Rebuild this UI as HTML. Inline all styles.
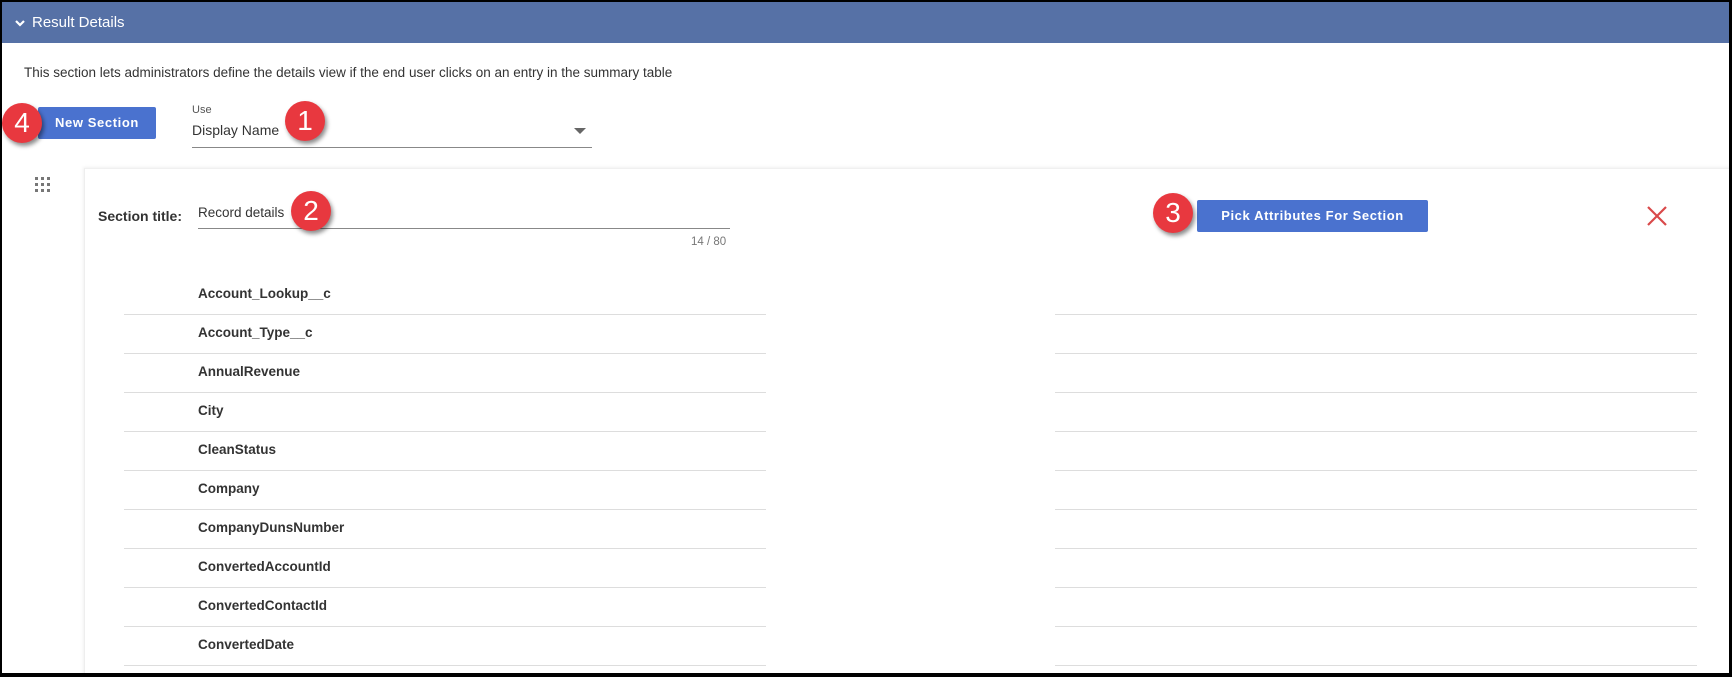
<!DOCTYPE html>
<html><head><meta charset="utf-8"><style>
*{margin:0;padding:0;box-sizing:border-box}
body{width:1732px;height:677px;overflow:hidden;background:#000;font-family:"Liberation Sans",sans-serif;position:relative}
.frame{position:absolute;left:2px;top:2px;width:1727px;height:671px;background:#fff;overflow:hidden}
.hdr{position:absolute;left:0;top:0;width:100%;height:41px;background:#5671a6;color:#fff;font-size:15px;line-height:41px;padding-left:12px}
.a{position:absolute;white-space:nowrap}
.badge{position:absolute;width:40px;height:40px;border-radius:50%;background:#e8383f;color:#fff;font-size:28px;text-align:center;line-height:40px;box-shadow:2px 3px 4px rgba(0,0,0,.45)}
.btn{position:absolute;background:#4a72cf;color:#fff;font-weight:bold;font-size:13px;letter-spacing:.6px;text-align:center;border-radius:2px}
.row{position:absolute;left:196px;font-size:13.5px;font-weight:bold;color:#333}
.ln{position:absolute;height:1px;background:#ddd}
</style></head><body><div class="frame">
<div class="hdr"><svg width="12" height="10" style="vertical-align:middle;margin-right:6px"><path d="M2 3 L6 7 L10 3" stroke="#fff" stroke-width="2.2" fill="none"/></svg>Result Details</div>
<div class="a" style="left:22px;top:63px;font-size:13.5px;color:#333">This section lets administrators define the details view if the end user clicks on an entry in the summary table</div>
<div class="btn" style="left:36px;top:105px;width:118px;height:32px;line-height:32px">New Section</div>
<div class="badge" style="left:0px;top:101px">4</div>
<div class="a" style="left:190px;top:102px;font-size:11px;color:#555">Use</div>
<div class="a" style="left:190px;top:120px;font-size:14px;color:#333">Display Name</div>
<svg class="a" style="left:572px;top:126px" width="12" height="8"><path d="M0 0 L12 0 L6 6Z" fill="#666"/></svg>
<div class="ln" style="left:190px;top:145px;width:400px;background:#888"></div>
<div class="badge" style="left:283px;top:99px">1</div>
<svg class="a" style="left:33px;top:175px" width="18" height="22"><g fill="#777"><rect x="0" y="0" width="3" height="3"/><rect x="6" y="0" width="3" height="3"/><rect x="12" y="0" width="3" height="3"/><rect x="0" y="6" width="3" height="3"/><rect x="6" y="6" width="3" height="3"/><rect x="12" y="6" width="3" height="3"/><rect x="0" y="12" width="3" height="3"/><rect x="6" y="12" width="3" height="3"/><rect x="12" y="12" width="3" height="3"/></g></svg>
<div class="a" style="left:82px;top:166px;width:1660px;height:520px;border-left:1px solid #eee;border-top:1px solid #f0f0f0;box-shadow:-1px -1px 3px rgba(0,0,0,.06)"></div>
<div class="a" style="left:96px;top:206px;font-size:14px;font-weight:bold;color:#333">Section title:</div>
<div class="a" style="left:196px;top:203px;font-size:13.5px;color:#333">Record details</div>
<div class="ln" style="left:196px;top:226px;width:532px;background:#888"></div>
<div class="a" style="left:689px;top:234px;font-size:11.5px;color:#777">14 / 80</div>
<div class="badge" style="left:289px;top:189px">2</div>
<div class="btn" style="left:1195px;top:198px;width:231px;height:32px;line-height:32px">Pick Attributes For Section</div>
<div class="badge" style="left:1151px;top:191px">3</div>
<svg class="a" style="left:1644px;top:203px" width="22" height="22"><path d="M2 2 L20 20 M20 2 L2 20" stroke="#d9494a" stroke-width="2.2"/></svg>
<div class="row" style="top:284px">Account_Lookup__c</div>
<div class="row" style="top:323px">Account_Type__c</div>
<div class="row" style="top:362px">AnnualRevenue</div>
<div class="row" style="top:401px">City</div>
<div class="row" style="top:440px">CleanStatus</div>
<div class="row" style="top:479px">Company</div>
<div class="row" style="top:518px">CompanyDunsNumber</div>
<div class="row" style="top:557px">ConvertedAccountId</div>
<div class="row" style="top:596px">ConvertedContactId</div>
<div class="row" style="top:635px">ConvertedDate</div>
<div class="ln" style="left:122px;top:312px;width:642px"></div><div class="ln" style="left:1053px;top:312px;width:642px"></div>
<div class="ln" style="left:122px;top:351px;width:642px"></div><div class="ln" style="left:1053px;top:351px;width:642px"></div>
<div class="ln" style="left:122px;top:390px;width:642px"></div><div class="ln" style="left:1053px;top:390px;width:642px"></div>
<div class="ln" style="left:122px;top:429px;width:642px"></div><div class="ln" style="left:1053px;top:429px;width:642px"></div>
<div class="ln" style="left:122px;top:468px;width:642px"></div><div class="ln" style="left:1053px;top:468px;width:642px"></div>
<div class="ln" style="left:122px;top:507px;width:642px"></div><div class="ln" style="left:1053px;top:507px;width:642px"></div>
<div class="ln" style="left:122px;top:546px;width:642px"></div><div class="ln" style="left:1053px;top:546px;width:642px"></div>
<div class="ln" style="left:122px;top:585px;width:642px"></div><div class="ln" style="left:1053px;top:585px;width:642px"></div>
<div class="ln" style="left:122px;top:624px;width:642px"></div><div class="ln" style="left:1053px;top:624px;width:642px"></div>
<div class="ln" style="left:122px;top:663px;width:642px"></div><div class="ln" style="left:1053px;top:663px;width:642px"></div>
</div></body></html>
